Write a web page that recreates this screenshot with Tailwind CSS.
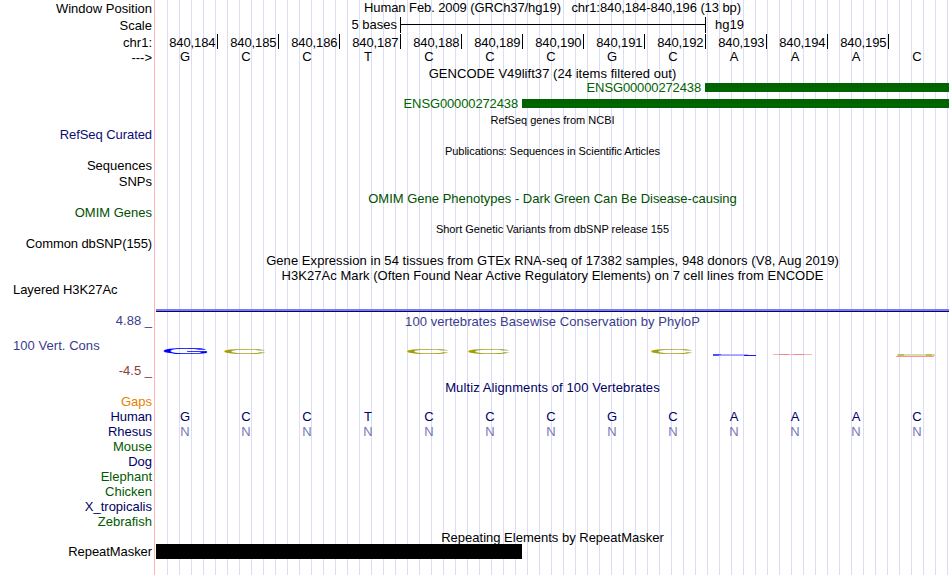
<!DOCTYPE html>
<html lang="en">
<head>
    <meta charset="UTF-8">
    <meta name="viewport" content="width=device-width, initial-scale=1.0">
    <title>Human chr1:840,184-840,196</title>
    <script src="https://cdn.jsdelivr.net/npm/@tailwindcss/browser@4"></script>
</head>
<body class="bg-white">
    <div class="flex w-[950px] h-[575px] overflow-hidden bg-white text-black text-[13px] leading-[15px] whitespace-pre font-['Liberation_Sans',Arial,sans-serif]">

        <!-- Track labels -->
        <div class="w-[155px] shrink-0 border-r border-[#ffb4b4] pt-px pr-0.5 flex flex-col items-end">
            <div>Window Position</div>
            <div class="mt-0.5">Scale</div>
            <div class="mt-0.5">chr1:</div>
            <div>---&gt;</div>
            <div class="mt-[62px] tracking-[-0.07px] text-[#0c0c78]">RefSeq Curated</div>
            <div class="mt-4">Sequences</div>
            <div class="mt-px">SNPs</div>
            <div class="mt-4 text-[#005000]">OMIM Genes</div>
            <div class="mt-4 tracking-[-0.1px]">Common dbSNP(155)</div>
            <div class="mt-[31px] self-start pl-[13px] tracking-[-0.07px]">Layered H3K27Ac</div>
            <div class="mt-4 text-[#3c3c8c]">4.88 _</div>
            <div class="mt-2.5 self-start pl-[13px] tracking-[0.05px] text-[#3c3c8c]">100 Vert. Cons</div>
            <div class="mt-2.5 text-[#8c3c3c]">-4.5 _</div>
            <div class="mt-4 text-[#e68200]">Gaps</div>
            <div class="tracking-[-0.1px] text-[#000064]">Human</div>
            <div class="text-[#000064]">Rhesus</div>
            <div class="text-[#005a00]">Mouse</div>
            <div class="text-[#000064]">Dog</div>
            <div class="text-[#005a00]">Elephant</div>
            <div class="text-[#005a00]">Chicken</div>
            <div class="text-[#000064]">X_tropicalis</div>
            <div class="text-[#005a00]">Zebrafish</div>
            <div class="mt-[15px] tracking-[-0.07px]">RepeatMasker</div>
        </div>

        <!-- Tracks, 61px per base, guide line every 12px -->
        <div class="w-[794px] shrink-0 pl-px flex flex-col bg-[repeating-linear-gradient(to_right,transparent_0,transparent_11px,#dcdcf8_11px,#dcdcf8_12px)] bg-[position:1px_0]">
            <div class="text-center tracking-[-0.09px]">Human Feb. 2009 (GRCh37/hg19)   chr1:840,184-840,196 (13 bp)</div>

            <div class="mt-0.5 h-4 flex">
                <div class="w-[241px] text-right">5 bases</div>
                <div class="ml-[3px] w-[306px] border-x border-black pt-[7px]"><div class="h-px bg-black"></div></div>
                <div class="ml-[9px]">hg19</div>
            </div>

            <div id="ruler" class="mt-px ml-px h-[15px] flex tracking-[-0.1px]"></div>
            <div class="bases flex -ml-[1.5px]"></div>

            <!-- GENCODE -->
            <div class="mt-0.5 h-[14px] text-center tracking-[0.05px]">GENCODE V49lift37 (24 items filtered out)</div>
            <div class="flex text-[#006400]">
                <div class="w-[545px] text-right tracking-[-0.13px]">ENSG00000272438</div>
                <div class="mt-[3px] ml-1 h-[9px] flex-1 bg-[#006400]"></div>
            </div>
            <div class="mt-px flex text-[#006400]">
                <div class="w-[362px] text-right tracking-[-0.13px]">ENSG00000272438</div>
                <div class="mt-[3px] ml-1 h-[9px] flex-1 bg-[#006400]"></div>
            </div>

            <div class="mt-0.5 text-center text-[11px]">RefSeq genes from NCBI</div>
            <div class="mt-4 text-center text-[11px] tracking-[-0.06px]">Publications: Sequences in Scientific Articles</div>
            <div class="mt-8 text-center text-[#005000]">OMIM Gene Phenotypes - Dark Green Can Be Disease-causing</div>
            <div class="mt-4 text-center text-[11px]">Short Genetic Variants from dbSNP release 155</div>
            <div class="mt-4 text-center tracking-[0.06px]">Gene Expression in 54 tissues from GTEx RNA-seq of 17382 samples, 948 donors (V8, Aug 2019)</div>
            <div class="text-center tracking-[0.05px]">H3K27Ac Mark (Often Found Near Active Regulatory Elements) on 7 cell lines from ENCODE</div>
            <div class="mt-[26px] h-[3px] bg-[#7878ff] border-b border-[#0a0a50]"></div>

            <!-- PhyloP conservation logo -->
            <div class="mt-0.5 text-center tracking-[0.06px] text-[#3c3c8c]">100 vertebrates Basewise Conservation by PhyloP</div>
            <svg class="mt-[11px] block" width="793" height="20" viewBox="156 340 793 20" font-size="10">
                <text transform="translate(160.8 353.6) scale(6.5 .94)" fill="#0000ff" stroke="#0000ff" stroke-width=".1">G</text>
                <g fill="#a0a000" stroke="#a0a000" stroke-width=".15">
                    <text transform="translate(221.8 353.6) scale(6.3 .8)">C</text>
                    <text transform="translate(404.8 353.6) scale(6.3 .8)">C</text>
                    <text transform="translate(465.8 353.6) scale(6.3 .8)">C</text>
                    <text transform="translate(648.8 353.6) scale(6.3 .8)">C</text>
                </g>
                <path d="M713 355h8" stroke="#5050ff" stroke-width="2"/>
                <path d="M721 354.5h27" stroke="#b0b0ff"/>
                <path d="M719 355.5h29" stroke="#a0a0ff"/>
                <path d="M744 355.5h12" stroke="#1414ff"/>
                <path d="M773 354.5h39" stroke="#ffb0b0"/>
                <path d="M779 354.5h10M794 354.5h10" stroke="#f08888"/>
                <path d="M897 355h38" stroke="#dcdcaa" stroke-width="2"/>
                <path d="M898 355h6M926 355h6" stroke="#bebe5a" stroke-width="2"/>
                <path d="M896 356.5h38" stroke="#ff9696"/>
            </svg>

            <!-- Multiz -->
            <div class="mt-5 text-center tracking-[0.1px] text-[#000064]">Multiz Alignments of 100 Vertebrates</div>
            <div class="bases mt-[14px] flex -ml-[1.5px] text-[#000064]"></div>
            <div id="rhesus" class="flex -ml-[1.5px] text-[#7878b4]"></div>

            <div class="mt-[91px] h-[14px] text-center">Repeating Elements by RepeatMasker</div>
            <div class="h-[15px] w-[366px] bg-black"></div>
        </div>
    </div>

    <script>
        const seq = 'GCCTCCCGCAAAC';
        const cell = c => `<div class="w-[61px] shrink-0 text-center">${c}</div>`;

        document.querySelectorAll('.bases').forEach(row => {
            row.innerHTML = [...seq].map(cell).join('');
        });
        document.getElementById('rhesus').innerHTML = [...seq].map(() => cell('N')).join('');

        let ticks = '';
        for (let pos = 184; pos < 196; pos++) {
            ticks += `<div class="w-[61px] shrink-0 border-r border-black pt-px pr-[1.5px] text-right">840,${pos}</div>`;
        }
        document.getElementById('ruler').innerHTML = ticks;
    </script>
</body>
</html>
